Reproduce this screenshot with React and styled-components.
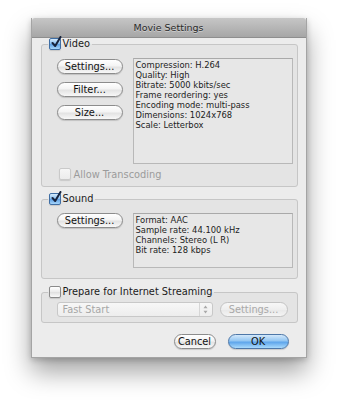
import styled, { createGlobalStyle } from "styled-components";

const GlobalStyle = createGlobalStyle`
  html, body {
    margin: 0;
    padding: 0;
    background: #ffffff;
  }
  body {
    font-family: "Lucida Grande", "DejaVu Sans", sans-serif;
    color: #1a1a1a;
  }
`;

const Stage = styled.div`
  width: 337px;
  height: 400px;
  padding-top: 18px;
  box-sizing: border-box;
  display: flex;
  justify-content: center;
  align-items: flex-start;
`;

const Window = styled.div`
  width: 276px;
  height: 340px;
  background: #ececec;
  border: 1px solid #a4a4a4;
  border-top: none;
  box-sizing: border-box;
  box-shadow: 0 14px 24px rgba(0, 0, 0, 0.36), 0 2px 6px rgba(0, 0, 0, 0.2);
  display: flex;
  flex-direction: column;
`;

const TitleBar = styled.div`
  height: 19px;
  flex: none;
  background: linear-gradient(#c6c6c6, #a6a6a6);
  border-bottom: 1px solid #8e8e8e;
  border-radius: 3px 3px 0 0;
  display: flex;
  align-items: center;
  justify-content: center;
  font-size: 9.5px;
  color: #2a2a2a;
  text-shadow: 0 1px 0 rgba(255, 255, 255, 0.4);
`;

const Body = styled.div`
  flex: 1;
  padding: 0 8px 0 9px;
  display: flex;
  flex-direction: column;
`;

const Group = styled.fieldset`
  margin: ${(p) => p.$gap || 0}px 0 0 0;
  padding: ${(p) => p.$pad || "8px 4px 6px 15px"};
  border: 1px solid #c6c6c6;
  border-radius: 3px;
  background: #e4e4e4;
  min-width: 0;
`;

const Legend = styled.legend`
  margin-left: -9px;
  padding: 0 2px 0 1px;
  display: flex;
  align-items: center;
  gap: 2px;
  font-size: 9.8px;
  line-height: 12px;
  color: #1a1a1a;
`;

const Box = styled.span`
  width: 10px;
  height: 10px;
  flex: none;
  position: relative;
  border-radius: 2px;
  border: 1px solid ${(p) => (p.$checked ? "#3f6ea4" : p.$disabled ? "#c9c9c9" : "#8a8a8a")};
  background: ${(p) =>
    p.$checked
      ? "linear-gradient(#d6ebfc, #86bdf0 48%, #5c9fe4 52%, #a7d6fb)"
      : p.$disabled
      ? "linear-gradient(#f6f6f6, #ececec)"
      : "linear-gradient(#ffffff, #ebebeb 50%, #e0e0e0 52%, #fafafa)"};
  box-shadow: 0 1px 1px rgba(0, 0, 0, 0.12);
  svg {
    position: absolute;
    left: 1px;
    top: -3px;
  }
`;

const Checkbox = ({ checked, disabled }) => (
  <Box $checked={checked} $disabled={disabled}>
    {checked && (
      <svg width="11" height="12" viewBox="0 0 11 12">
        <path d="M1.5 7 L4.2 10 L9.5 1" fill="none" stroke="#17233d" strokeWidth="2" strokeLinecap="round" strokeLinejoin="round" />
      </svg>
    )}
  </Box>
);

const Row = styled.div`
  display: flex;
  align-items: flex-start;
  gap: ${(p) => p.$gap || 10}px;
`;

const ButtonStack = styled.div`
  display: flex;
  flex-direction: column;
  gap: 8px;
  padding-top: 1px;
`;

const PushButton = styled.button`
  width: ${(p) => p.$w || 66}px;
  height: 15px;
  padding: 0;
  flex: none;
  border-radius: 8px;
  font-family: inherit;
  font-size: 9.8px;
  line-height: 13px;
  color: ${(p) => (p.disabled ? "#a9a9a9" : "#111")};
  border: 1px solid ${(p) => (p.$default ? "#4d77a8" : p.disabled ? "#c3c3c3" : "#8c8c8c")};
  background: ${(p) =>
    p.$default
      ? "linear-gradient(#d3e8fb, #93c6f2 45%, #5ea5eb 55%, #a9dafc)"
      : p.disabled
      ? "linear-gradient(#f7f7f7, #eeeeee 50%, #e8e8e8 52%, #f4f4f4)"
      : "linear-gradient(#ffffff, #f4f4f4 45%, #e3e3e3 55%, #f8f8f8)"};
  box-shadow: ${(p) => (p.disabled ? "none" : "0 1px 1px rgba(0, 0, 0, 0.15)")};
`;

const InfoBox = styled.div`
  flex: 1;
  height: ${(p) => p.$h}px;
  box-sizing: border-box;
  border: 1px solid #b8b8b8;
  border-top-color: #a9a9a9;
  background: #e7e7e7;
  padding: 1px 2px;
  font-size: 8.4px;
  line-height: 10px;
  color: #1c1c1c;
`;

const CheckRow = styled.div`
  display: flex;
  align-items: center;
  gap: 3px;
  margin: 4px 0 0 2px;
  font-size: 9.8px;
  color: ${(p) => (p.$disabled ? "#9b9b9b" : "#1a1a1a")};
`;

const Popup = styled.div`
  width: 156px;
  height: 15px;
  box-sizing: border-box;
  border: 1px solid #c8c8c8;
  border-radius: 3px;
  background: linear-gradient(#f7f7f7, #ededed);
  display: flex;
  align-items: center;
  font-size: 9.8px;
  color: #a6a6a6;
`;

const PopupLabel = styled.span`
  flex: 1;
  padding-left: 5px;
`;

const PopupArrows = styled.span`
  width: 12px;
  height: 100%;
  border-left: 1px solid #d6d6d6;
  display: flex;
  align-items: center;
  justify-content: center;
`;

const Footer = styled.div`
  display: flex;
  justify-content: flex-end;
  gap: 12px;
  padding: 11px 9px 0 0;
`;

export default function App() {
  return (
    <>
      <GlobalStyle />
      <Stage>
        <Window>
          <TitleBar>Movie Settings</TitleBar>
          <Body>
            <Group $pad="8px 4px 6px 15px">
              <Legend>
                <Checkbox checked />
                Video
              </Legend>
              <Row>
                <ButtonStack>
                  <PushButton>Settings...</PushButton>
                  <PushButton>Filter...</PushButton>
                  <PushButton>Size...</PushButton>
                </ButtonStack>
                <InfoBox $h={106}>
                  Compression: H.264
                  <br />
                  Quality: High
                  <br />
                  Bitrate: 5000 kbits/sec
                  <br />
                  Frame reordering: yes
                  <br />
                  Encoding mode: multi-pass
                  <br />
                  Dimensions: 1024x768
                  <br />
                  Scale: Letterbox
                </InfoBox>
              </Row>
              <CheckRow $disabled>
                <Checkbox disabled />
                Allow Transcoding
              </CheckRow>
            </Group>

            <Group $gap={6} $pad="8px 4px 10px 15px">
              <Legend>
                <Checkbox checked />
                Sound
              </Legend>
              <Row>
                <PushButton>Settings...</PushButton>
                <InfoBox $h={55}>
                  Format: AAC
                  <br />
                  Sample rate: 44.100 kHz
                  <br />
                  Channels: Stereo (L R)
                  <br />
                  Bit rate: 128 kbps
                </InfoBox>
              </Row>
            </Group>

            <Group $gap={7} $pad="4px 9px 5px 15px">
              <Legend>
                <Checkbox />
                Prepare for Internet Streaming
              </Legend>
              <Row $gap={7}>
                <Popup>
                  <PopupLabel>Fast Start</PopupLabel>
                  <PopupArrows>
                    <svg width="5" height="9" viewBox="0 0 5 9">
                      <path d="M2.5 0.5 L4.5 3.3 L0.5 3.3 Z M2.5 8.5 L4.5 5.7 L0.5 5.7 Z" fill="#a8a8a8" />
                    </svg>
                  </PopupArrows>
                </Popup>
                <PushButton disabled $w={68}>
                  Settings...
                </PushButton>
              </Row>
            </Group>

            <Footer>
              <PushButton $w={42}>Cancel</PushButton>
              <PushButton $default $w={61}>
                OK
              </PushButton>
            </Footer>
          </Body>
        </Window>
      </Stage>
    </>
  );
}
